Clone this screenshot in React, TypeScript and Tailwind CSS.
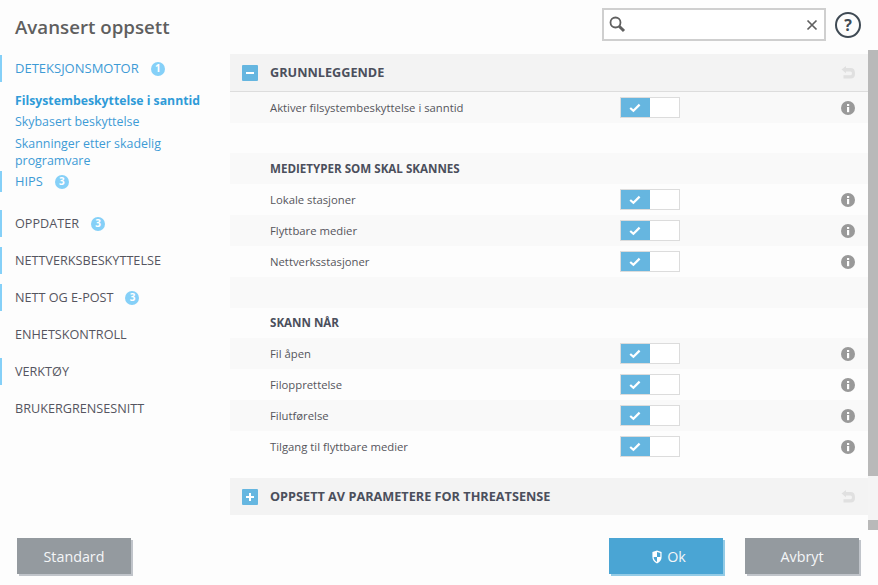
const font = 'font-["Open_Sans","Noto_Sans",sans-serif]'

function Badge({ n }: { n: number }) {
  return (
    <span className="ml-[12px] flex h-[14px] w-[14px] items-center justify-center rounded-full bg-[#85d0f8] text-[10px] font-bold text-white">
      {n}
    </span>
  )
}

function NavItem({ label, badge, bar, blue }: { label: string; badge?: number; bar?: boolean; blue?: boolean }) {
  return (
    <div className={`flex h-[27px] items-center border-l-2 pl-[13px] ${bar ? 'border-[#85d0f8]' : 'border-transparent'} ${blue ? 'text-[13px] text-[#3d9bd6]' : 'text-[12.65px] text-[#555560]'}`}>
      <span>{label}</span>
      {badge && <Badge n={badge} />}
    </div>
  )
}

function InfoIcon() {
  return (
    <svg width="14" height="14" viewBox="0 0 14 14">
      <circle cx="7" cy="7" r="7" fill="#999999" />
      <rect x="6" y="6" width="2.2" height="5.2" fill="#fff" />
      <rect x="6" y="3" width="2.2" height="2" fill="#fff" />
    </svg>
  )
}

function UndoIcon() {
  return (
    <svg width="14" height="13" viewBox="0 0 14 13">
      <path d="M5 0 L0.5 3.6 L5 7.2 V5.4 H9.6 Q11 5.4 11 7.3 Q11 9.2 9.6 9.2 H2.5 V12.6 H9.6 Q14 12.6 14 7.4 Q14 2 9.6 2 H5 Z" fill="#e0e0e0" />
    </svg>
  )
}

function Toggle() {
  return (
    <div className="flex h-[21px] w-[60px] border border-[#dcdcdc] bg-white">
      <div className="flex w-[29px] items-center justify-center bg-[#66b6e0] pr-[2px]">
        <svg width="12" height="10" viewBox="0 0 12 10">
          <path d="M1.2 5 L4.4 7.8 L10.6 1.6" fill="none" stroke="#fff" strokeWidth="2.2" />
        </svg>
      </div>
    </div>
  )
}

function Row({ label, shaded }: { label: string; shaded?: boolean }) {
  return (
    <div className={`flex h-[31px] items-center pl-[40px] pr-[13px] text-[11.3px] text-[#55555c] ${shaded ? 'bg-[#f9f9f9]' : ''}`}>
      <span className="w-[350px] pt-[1px]">{label}</span>
      <Toggle />
      <span className="ml-auto flex"><InfoIcon /></span>
    </div>
  )
}

function SubHead({ label, shaded, h }: { label: string; shaded?: boolean; h?: string }) {
  return (
    <div className={`flex items-center pl-[40px] text-[11.6px] font-bold text-[#4b4f5c] ${h ?? 'h-[31px] pt-[1px]'} ${shaded ? 'bg-[#f9f9f9]' : ''}`}>
      {label}
    </div>
  )
}

function SectionHead({ label, open }: { label: string; open?: boolean }) {
  return (
    <div className={`flex items-center bg-[#f3f3f3] pl-[12px] pr-[13px] ${open ? 'h-[38px] border-b border-[#dddddd]' : 'h-[37px]'}`}>
      <div className="flex h-[16px] w-[16px] items-center justify-center rounded-[1px] bg-[#65b6e0]">
        <svg width="10" height="10" viewBox="0 0 10 10">
          <rect x="1" y="4" width="8" height="2" fill="#fff" />
          {!open && <rect x="4" y="1" width="2" height="8" fill="#fff" />}
        </svg>
      </div>
      <span className="ml-[12px] pt-[1px] text-[12.7px] font-bold text-[#4b4f5c]">{label}</span>
      <span className="ml-auto flex"><UndoIcon /></span>
    </div>
  )
}

function Btn({ children, blue, className }: { children: React.ReactNode; blue?: boolean; className?: string }) {
  return (
    <button className={`flex h-[36px] w-[114px] items-center justify-center pt-[1px] text-[14.3px] text-[#f4f6f8] ${blue ? 'bg-[#4aa5d4] shadow-[2px_2px_0_#93cbe6]' : 'bg-[#949a9f] shadow-[2px_2px_0_#c0c4ca]'} ${className ?? ''}`}>
      {children}
    </button>
  )
}

export default function App() {
  return (
    <div className={`flex h-[585px] w-[878px] flex-col overflow-hidden bg-[#fdfdfd] ${font}`}>
      {/* Header */}
      <div className="flex h-[50px] shrink-0 items-start pl-[15px]">
        <h1 className="mt-[12px] text-[18.7px] leading-[30px] font-semibold text-[#5f5f5f]">Avansert oppsett</h1>
        <div className="mt-[8px] ml-auto flex h-[33px] w-[224px] items-center justify-between border-2 border-[#cfcfcf] bg-white pr-[6px] pl-[5px]">
          <svg width="17" height="17" viewBox="0 0 17 17">
            <circle cx="6.5" cy="6.5" r="5" fill="none" stroke="#606060" strokeWidth="1.8" />
            <path d="M10.2 10.2 L15 15" stroke="#606060" strokeWidth="3" />
          </svg>
          <svg width="12" height="12" viewBox="0 0 12 12">
            <path d="M1.5 1.5 L10.5 10.5 M10.5 1.5 L1.5 10.5" stroke="#606060" strokeWidth="1.7" />
          </svg>
        </div>
        <div className="mt-[12px] mr-[17px] ml-[9px] flex h-[26px] w-[26px] items-center justify-center rounded-full border-2 border-[#3f4a54] text-[16px] font-bold text-[#3f4a54]">
          ?
        </div>
      </div>

      <div className="flex h-[482px] shrink-0">
        {/* Sidebar */}
        <div className="w-[230px] shrink-0 pt-[5px]">
          <NavItem label="DETEKSJONSMOTOR" badge={1} bar blue />
          <div className="mt-[9px] pl-[15px] text-[12.4px] text-[#3d9bd6]">
            <div className="flex h-[21px] items-center text-[12.25px] font-bold text-[#2f9bd8]">Filsystembeskyttelse i sanntid</div>
            <div className="flex h-[21px] items-center">Skybasert beskyttelse</div>
            <div className="w-[170px] pt-[2px] leading-[17px]">Skanninger etter skadelig programvare</div>
          </div>
          <div className="mt-[2px] flex h-[21px] items-center border-l-2 border-[#85d0f8] pl-[13px] text-[12.8px] text-[#3d9bd6]">
            <span>HIPS</span>
            <Badge n={3} />
          </div>
          <div className="mt-[18px] flex flex-col gap-[10px]">
            <NavItem label="OPPDATER" badge={3} bar />
            <NavItem label="NETTVERKSBESKYTTELSE" bar />
            <NavItem label="NETT OG E-POST" badge={3} bar />
            <NavItem label="ENHETSKONTROLL" />
            <NavItem label="VERKTØY" bar />
            <NavItem label="BRUKERGRENSESNITT" />
          </div>
        </div>

        {/* Settings */}
        <div className="w-[638px] shrink-0 pt-[4px]">
          <SectionHead label="GRUNNLEGGENDE" open />
          <Row label="Aktiver filsystembeskyttelse i sanntid" shaded />
          <div className="h-[30px]" />
          <SubHead label="MEDIETYPER SOM SKAL SKANNES" shaded />
          <Row label="Lokale stasjoner" />
          <Row label="Flyttbare medier" shaded />
          <Row label="Nettverksstasjoner" />
          <div className="h-[31px] bg-[#f9f9f9]" />
          <SubHead label="SKANN NÅR" h="h-[30px]" />
          <Row label="Fil åpen" shaded />
          <Row label="Filopprettelse" />
          <Row label="Filutførelse" shaded />
          <Row label="Tilgang til flyttbare medier" />
          <div className="h-[16px]" />
          <SectionHead label="OPPSETT AV PARAMETERE FOR THREATSENSE" />
        </div>

        {/* Scrollbar */}
        <div className="flex h-[480px] w-[10px] shrink-0 flex-col">
          <div className="h-[426px] bg-[#b9b9b9]" />
          <div className="h-[44px] bg-[#f4f4f4]" />
          <div className="h-[10px] bg-[#b9b9b9]" />
        </div>
      </div>

      {/* Footer */}
      <div className="flex pt-[6px] pr-[19px] pl-[17px]">
        <Btn>Standard</Btn>
        <Btn blue className="ml-auto gap-[5px] pl-[6px]">
          <svg width="10" height="14" viewBox="0 0 12 14" preserveAspectRatio="none">
            <path d="M6 0.5 L11.5 2 V7 Q11.5 11 6 13.5 Q0.5 11 0.5 7 V2 Z" fill="#fff" />
            <path d="M6 2 L10 3 V7 H6 Z M6 7 V12 Q2 10 2 7 Z" fill="#4aa5d4" />
          </svg>
          Ok
        </Btn>
        <Btn className="ml-[22px]">Avbryt</Btn>
      </div>
    </div>
  )
}
